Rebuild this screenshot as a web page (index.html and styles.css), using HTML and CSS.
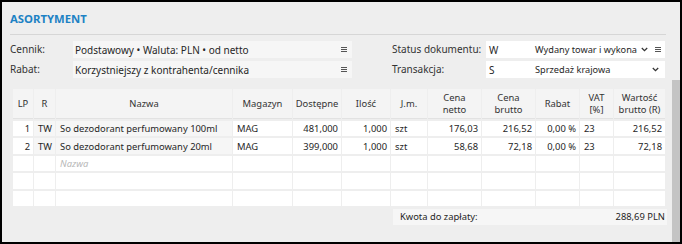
FILE: index.html
```html
<!DOCTYPE html>
<html lang="pl">
<head>
    <meta charset="UTF-8">
    <title>Asortyment</title>
    <link rel="stylesheet" href="styles.css">
</head>
<body>
    <div class="frame">
        <div class="head">
            <h2 class="title">ASORTYMENT</h2>
            <div class="filters">
                <span class="label">Cennik:</span>
                <div class="field soft">
                    <span class="value">Podstawowy • Waluta: PLN • od netto</span>
                    <svg class="menu" width="6" height="5" viewBox="0 0 6 5"><path d="M0 .5h6M0 2.5h6M0 4.5h6" stroke="#555" stroke-width="1"/></svg>
                </div>
                <span class="label right">Status dokumentu:</span>
                <div class="field">
                    <span class="code">W</span>
                    <span class="value">Wydany towar i wykona</span>
                    <svg class="chevron" width="7" height="5" viewBox="0 0 7 5"><path d="M.8 1l2.7 2.6L6.2 1" fill="none" stroke="#333" stroke-width="1.3"/></svg>
                    <svg class="menu" width="6" height="5" viewBox="0 0 6 5"><path d="M0 .5h6M0 2.5h6M0 4.5h6" stroke="#555" stroke-width="1"/></svg>
                </div>

                <span class="label">Rabat:</span>
                <div class="field soft">
                    <span class="value">Korzystniejszy z kontrahenta/cennika</span>
                    <svg class="menu" width="6" height="5" viewBox="0 0 6 5"><path d="M0 .5h6M0 2.5h6M0 4.5h6" stroke="#555" stroke-width="1"/></svg>
                </div>
                <span class="label right">Transakcja:</span>
                <div class="field">
                    <span class="code">S</span>
                    <span class="value">Sprzedaż krajowa</span>
                    <svg class="chevron last" width="7" height="5" viewBox="0 0 7 5"><path d="M.8 1l2.7 2.6L6.2 1" fill="none" stroke="#333" stroke-width="1.3"/></svg>
                </div>
            </div>
        </div>

        <div class="body">
            <div class="grid-area">
                <table class="grid">
                    <colgroup>
                        <col style="width: 20px">
                        <col style="width: 21px">
                        <col style="width: 176px">
                        <col style="width: 59px">
                        <col style="width: 48px">
                        <col style="width: 48px">
                        <col style="width: 36px">
                        <col style="width: 53px">
                        <col style="width: 53px">
                        <col style="width: 43px">
                        <col style="width: 33px">
                        <col style="width: 51px">
                    </colgroup>
                    <thead>
                        <tr>
                            <th>LP</th>
                            <th>R</th>
                            <th>Nazwa</th>
                            <th>Magazyn</th>
                            <th>Dostępne</th>
                            <th>Ilość</th>
                            <th>J.m.</th>
                            <th>Cena<br>netto</th>
                            <th>Cena<br>brutto</th>
                            <th>Rabat</th>
                            <th>VAT<br>[%]</th>
                            <th>Wartość<br>brutto (R)</th>
                        </tr>
                    </thead>
                    <tbody>
                        <tr>
                            <td class="num">1</td>
                            <td class="ro">TW</td>
                            <td class="ro">So dezodorant perfumowany 100ml</td>
                            <td>MAG</td>
                            <td class="num">481,000</td>
                            <td class="num">1,000</td>
                            <td>szt</td>
                            <td class="num">176,03</td>
                            <td class="num">216,52</td>
                            <td class="num">0,00 %</td>
                            <td>23</td>
                            <td class="num">216,52</td>
                        </tr>
                        <tr>
                            <td class="num">2</td>
                            <td class="ro">TW</td>
                            <td class="ro">So dezodorant perfumowany 20ml</td>
                            <td>MAG</td>
                            <td class="num">399,000</td>
                            <td class="num">1,000</td>
                            <td>szt</td>
                            <td class="num">58,68</td>
                            <td class="num">72,18</td>
                            <td class="num">0,00 %</td>
                            <td>23</td>
                            <td class="num">72,18</td>
                        </tr>
                        <tr>
                            <td></td><td></td><td class="placeholder">Nazwa</td>
                            <td></td><td></td><td></td><td></td><td></td><td></td><td></td><td></td><td></td>
                        </tr>
                        <tr>
                            <td></td><td></td><td></td><td></td><td></td><td></td><td></td><td></td><td></td><td></td><td></td><td></td>
                        </tr>
                        <tr>
                            <td></td><td></td><td></td><td></td><td></td><td></td><td></td><td></td><td></td><td></td><td></td><td></td>
                        </tr>
                    </tbody>
                </table>
                <div class="total">
                    <span>Kwota do zapłaty:</span>
                    <span>288,69 PLN</span>
                </div>
            </div>
            <div class="scrollbar"></div>
        </div>
    </div>
</body>
</html>
```

FILE: styles.css
```css
body {
    margin: 0;
    padding: 0;
    font-family: "Noto Sans", "Open Sans", sans-serif;
    font-size: 10px;
    color: #262626;
}

.frame {
    width: 682px;
    height: 244px;
    box-sizing: border-box;
    border: 2px solid #000;
    background-color: #eeeeee;
    display: flex;
    flex-direction: column;
}

.head {
    padding: 0 14px 0 8px;
}

.title {
    margin: 0;
    padding: 9px 0 7px 0;
    font-size: 11.3px;
    line-height: 16px;
    font-weight: bold;
    color: #1d82c4;
    border-bottom: 1px solid #d6d6d6;
}

.filters {
    display: grid;
    grid-template-columns: 63px 279px 134px 179px;
    row-gap: 3px;
    margin-top: 6px;
    align-items: center;
}

.label {
    color: #333;
    line-height: 17px;
    white-space: nowrap;
}

.label.right {
    padding-left: 40px;
}

.field {
    display: flex;
    align-items: center;
    height: 17px;
    background-color: #fff;
    padding: 0 4px 0 3px;
}

.field.soft {
    background-color: #f6f6f6;
    padding-left: 2px;
    padding-right: 5px;
}

.field .code {
    width: 46px;
    flex: none;
}

.field .value {
    flex: 1;
    white-space: nowrap;
}

.field:not(.soft) .value {
    font-size: 9.2px;
}

.chevron {
    flex: none;
    margin: 0 7px 0 1px;
}

.chevron.last {
    margin-right: 2px;
}

.menu {
    flex: none;
}

.body {
    flex: 1;
    display: flex;
    margin-top: 2px;
}

.grid-area {
    flex: 1;
    padding: 9px 5px 0 10px;
}

.scrollbar {
    width: 8px;
    background-color: #c4c4c4;
}

.grid {
    width: 654px;
    table-layout: fixed;
    border-collapse: separate;
    border-spacing: 1px 2px;
    margin: -2px 0 0 0;
    font-size: 9.4px;
}

.grid th {
    height: 29px;
    padding: 0 1px;
    background-color: #f4f4f4;
    font-weight: normal;
    color: #333;
    line-height: 11.5px;
    text-align: center;
    border-bottom: 1px solid #e2e2e2;
}

.grid td {
    height: 15.4px;
    padding: 0 3px 0 4px;
    background-color: #fff;
    white-space: nowrap;
    overflow: hidden;
    line-height: 15px;
}

.grid td.ro {
    background-color: #f6f6f6;
}

.grid td.num {
    text-align: right;
}

.grid td.placeholder {
    color: #b8b8b8;
    font-style: italic;
}

.total {
    display: flex;
    justify-content: space-between;
    margin: 1px 0 0 381px;
    height: 16px;
    line-height: 16px;
    padding: 0 2px 0 7px;
    background-color: #f6f6f6;
    font-size: 9.4px;
}
```
